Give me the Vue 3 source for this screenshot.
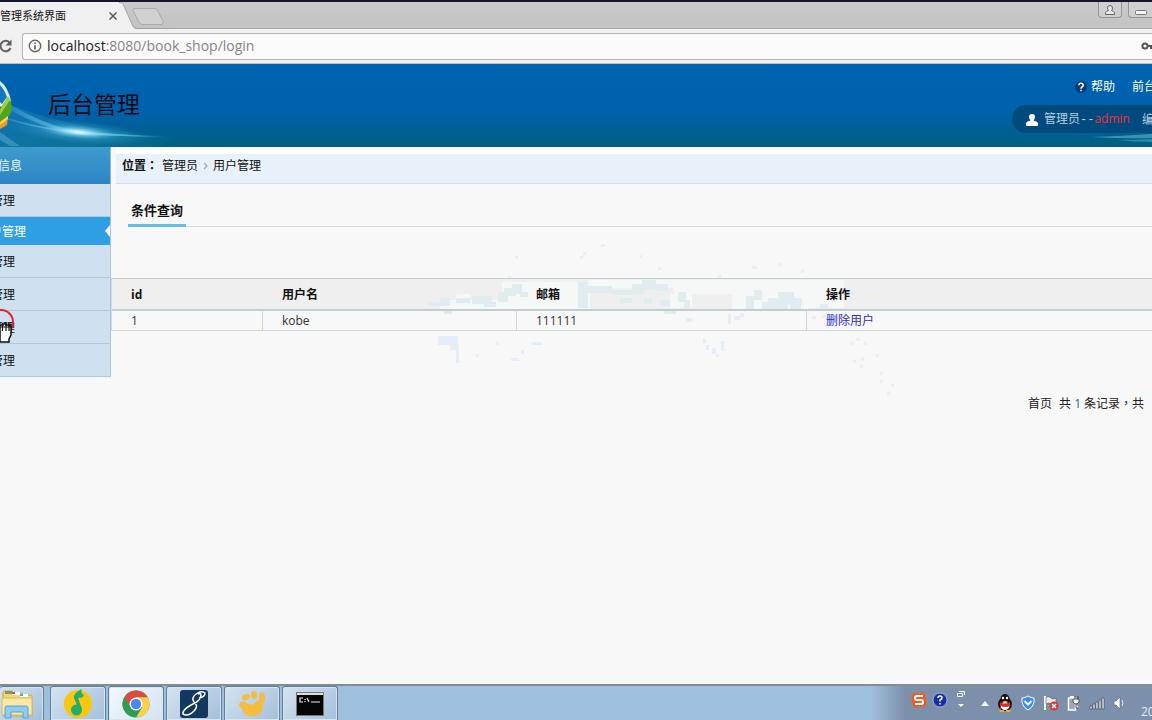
<script setup>
import { ref } from 'vue'

const url = ref('localhost:8080/book_shop/login')
const menu = [
  { text: '管理', kind: 'first' },
  { text: '户管理', kind: 'active' },
  { text: '管理', kind: '' },
  { text: '管理', kind: '' },
  { text: '管理', kind: '' },
  { text: '管理', kind: 'last' }
]
const users = [{ id: 1, name: 'kobe', mail: '111111' }]

// Watermark map cells: x, y, width, height
const sea = [
  [0, 64, 22, 4], [12, 60, 10, 6], [28, 60, 14, 5], [44, 58, 20, 8], [56, 64, 12, 5], [70, 54, 10, 10],
  [76, 50, 12, 8], [84, 46, 10, 10], [92, 54, 8, 5], [16, 72, 8, 4], [150, 44, 10, 26], [160, 48, 24, 7],
  [184, 52, 20, 5], [204, 46, 12, 10], [214, 42, 14, 10], [228, 46, 12, 7], [192, 60, 12, 5], [216, 60, 8, 5],
  [232, 62, 10, 6], [250, 54, 8, 10], [256, 62, 6, 8], [236, 72, 12, 4], [318, 58, 8, 14], [326, 52, 8, 10],
  [334, 64, 26, 7], [340, 60, 34, 7], [350, 54, 16, 8], [336, 68, 10, 4], [362, 66, 11, 6], [418, 54, 8, 3], [392, 66, 8, 4]
]
const blue = [
  [10, 98, 20, 9], [22, 107, 9, 5], [28, 112, 3, 13], [104, 104, 10, 3], [83, 120, 8, 3], [93, 112, 3, 4],
  [300, 76, 3, 10], [306, 78, 6, 4], [312, 75, 4, 4], [258, 80, 6, 4], [275, 101, 3, 4], [278, 107, 3, 5],
  [284, 110, 4, 6], [293, 103, 3, 10], [288, 116, 3, 3]
]
const dots = [
  [80, 38, 3, 3], [87, 18, 3, 3], [152, 18, 3, 3], [155, 14, 3, 3], [173, 6, 4, 3], [212, 17, 2, 3], [230, 29, 3, 3],
  [324, 28, 5, 3], [351, 25, 3, 3], [373, 32, 3, 3], [290, 37, 3, 3], [68, 104, 3, 3], [48, 116, 3, 3],
  [422, 104, 3, 3], [428, 100, 4, 3], [436, 104, 3, 3], [448, 116, 3, 3], [425, 122, 3, 3], [433, 119, 3, 4],
  [432, 127, 3, 3], [452, 134, 3, 3], [452, 142, 3, 3], [463, 146, 3, 3], [459, 154, 3, 3], [384, 78, 4, 3], [394, 77, 4, 3]
]
const land = [
  [12, 62, 90, 10], [28, 56, 14, 6], [74, 44, 28, 22], [96, 44, 66, 28], [160, 42, 86, 8], [246, 42, 44, 14], [290, 42, 34, 14],
  [304, 56, 20, 16], [320, 42, 60, 30], [372, 42, 44, 28], [242, 56, 22, 14]
]
</script>

<template>
  <div class="desktop">
    <div class="tabstrip">
      <svg class="tabshape" width="170" height="27" viewBox="0 0 170 27">
        <path d="M0 0H119C122 0 123 1 124 4L132 22C133 25 134 27 138 27H0Z" fill="#f1f0f1" />
        <path d="M119 .5C122 .5 123 2 124 4L132 22C133 25 134 26.500 138 26.500H170" fill="none" stroke="#a3a3a3" />
        <path d="M135 6.500H154Q157 6.500 158 9L163 19Q164 22.500 161 22.500H143Q140 22.500 139 20L133 9Q132 6.500 135 6.500Z" fill="#d1d1d2" stroke="#a9a9a9" />
      </svg>
      <span class="tabtitle">管理系统界面</span>
      <button class="tabclose" aria-label="关闭">
        <svg width="10" height="10" viewBox="0 0 10 10"><path d="M1.500 1.500L8.500 8.500M8.500 1.500L1.500 8.500" stroke="#5a5a5a" stroke-width="1.500" /></svg>
      </button>
      <div class="winbtns">
        <button class="wb" aria-label="用户">
          <svg width="12" height="12" viewBox="0 0 12 12" fill="#e6e6e6" stroke="#666"><path d="M1.500 10.500V8.500Q2 7 4.500 6.500Q3.500 5.500 3.500 4Q3.500 1.500 6 1.500T8.500 4Q8.500 5.500 7.500 6.500Q10 7 10.500 8.500V10.500Z" /></svg>
        </button>
        <button class="wb cut" aria-label="最小化">
          <svg width="14" height="12" viewBox="0 0 14 12"><rect x="1.500" y="6.500" width="11" height="4" rx="1" fill="#f5f5f5" stroke="#777" /></svg>
        </button>
      </div>
    </div>

    <div class="toolbar">
      <button class="reload" aria-label="重新加载">
        <svg width="14" height="16" viewBox="0 0 14 16"><path d="M9.500 4.500A5.200 5.200 0 1 0 10.500 10" fill="none" stroke="#616161" stroke-width="2" /><path d="M11.500 1.500V7.500H5.500Z" fill="#616161" /></svg>
      </button>
      <label class="address">
        <svg width="14" height="14" viewBox="0 0 14 14"><circle cx="7" cy="7" r="5.700" fill="none" stroke="#666" stroke-width="1.400" /><path d="M7 6.200V10.500M7 3.500V5" stroke="#555" stroke-width="1.600" /></svg>
        <span class="urlbox">
          <input v-model="url" aria-label="网址" />
          <span class="urltext" aria-hidden="true"><b>localhost</b>:8080/book_shop/login</span>
        </span>
        <svg width="11" height="10" viewBox="0 0 11 10"><circle cx="4" cy="5" r="2.600" fill="none" stroke="#555" stroke-width="2" /><path d="M6.500 5H11M10 5V8" stroke="#555" stroke-width="2" /></svg>
      </label>
    </div>

    <header class="banner">
      <svg class="swoosh" width="200" height="83" viewBox="0 0 200 83">
        <defs>
          <radialGradient id="glow"><stop offset="0" stop-color="#f2ffff" /><stop offset=".2" stop-color="#8fdcf5" stop-opacity=".9" /><stop offset=".55" stop-color="#35a3cf" stop-opacity=".4" /><stop offset="1" stop-color="#2396c0" stop-opacity="0" /></radialGradient>
          <linearGradient id="ray"><stop offset="0" stop-color="#2c8fd6" stop-opacity=".7" /><stop offset=".5" stop-color="#bdf0fb" /><stop offset="1" stop-color="#56b4d2" stop-opacity="0" /></linearGradient>
          <linearGradient id="haze" x1="0" y1="0" x2="1" y2="0"><stop offset="0" stop-color="#1b7fb8" stop-opacity=".6" /><stop offset=".5" stop-color="#1b86b0" stop-opacity=".4" /><stop offset="1" stop-color="#1b8cae" stop-opacity="0" /></linearGradient>
        </defs>
        <path d="M0 36C35 52 80 66 180 73L160 83H0Z" fill="url(#haze)" />
        <path d="M8 40C32 52 50 64 88 68L165 73L82 71C50 66 28 56 8 45Z" fill="url(#ray)" opacity=".8" />
        <path d="M8 55C38 64 65 70 165 73" fill="none" stroke="url(#ray)" stroke-width="1.500" />
        <path d="M0 68L20 82H10L0 76Z" fill="#4aa5c8" opacity=".6" />
        <ellipse cx="78" cy="68" rx="70" ry="12" fill="url(#glow)" transform="rotate(5 78 68)" />
        <path d="M0 17Q8 23 11 37L3 45L0 42Z" fill="#d9eefb" />
        <path d="M0 21Q4 25 7 33L2 40L0 38Z" fill="#1376c0" />
        <path d="M0 45L8 33Q12 38 12 46L9 52L0 58Z" fill="#4fa51e" />
        <path d="M0 46L8 32L10 36L0 51Z" fill="#a4ce36" />
        <path d="M0 58L8 52L7 61L0 65Z" fill="#f29a1d" />
        <path d="M0 58L8 52V55L0 61Z" fill="#ffd04c" />
      </svg>
      <h1>后台管理</h1>
      <div class="account">
        <nav class="links">
          <svg width="12" height="12" viewBox="0 0 12 12"><circle cx="6" cy="6" r="6" fill="#073d76" /><path d="M3.800 4.300Q4 2.300 6 2.300T8.200 4.200Q8.200 5.300 6.900 6Q6 6.500 6 7.700M6 8.800V10.300" fill="none" stroke="#fff" stroke-width="1.500" /></svg>
          <a href="#">帮助</a><i></i><a href="#">前台</a>
        </nav>
        <div class="pill">
          <svg width="12" height="12" viewBox="0 0 12 12"><path d="M0 11V9Q1 7 4 6.800L4.300 6Q3 5 3 3Q3 0 6 0T9 3Q9 5 7.700 6L8 6.800Q11 7 12 9V11Q12 12 11 12H1Q0 12 0 11Z" fill="#fff" /></svg>
          <span>管理员<span class="dash">--</span><em>admin</em></span><a href="#">编</a>
        </div>
        <svg class="streak" width="60" height="12" viewBox="0 0 60 12"><path d="M0 4Q30 3 60 1V5Q30 6 0 4Z" fill="#5db4cc" opacity=".6" /><path d="M25 7Q42 7 60 6V9Q42 9 25 7Z" fill="#4aa3bd" opacity=".6" /></svg>
      </div>
    </header>

    <div class="body">
      <aside>
        <h2>信息</h2>
        <ul>
          <li v-for="(m, i) in menu" :key="i" :class="m.kind"><a href="#">{{ m.text }}</a></li>
        </ul>
        <svg class="cursor" width="18" height="36" viewBox="0 0 18 36">
          <circle cx="1" cy="13" r="12" fill="none" stroke="#e3222d" stroke-width="2" />
          <path d="M0 16H3V15H6V16H9V17H11V26L9 30V33H0Z" fill="#fff" stroke="#111" stroke-width="1.500" />
          <path d="M2.500 14V22M6 14V22M9 14V22M0 18H11" stroke="#111" stroke-width="1.200" />
        </svg>
      </aside>

      <main>
        <div class="crumbs">
          <b>位置：</b><a href="#">管理员</a>
          <svg width="5" height="8" viewBox="0 0 5 8"><path d="M1 1L4 4L1 7" fill="none" stroke="#9aa9b5" stroke-width="1.200" /></svg>
          <a href="#">用户管理</a>
        </div>
        <div class="section"><h3>条件查询</h3></div>
        <div class="listing">
          <svg class="map" width="480" height="160" viewBox="0 0 480 160" shape-rendering="crispEdges">
            <rect v-for="(r, i) in land" :key="'l' + i" :x="r[0]" :y="r[1]" :width="r[2]" :height="r[3]" fill="#f6f7f7" />
            <rect v-for="(r, i) in sea" :key="'s' + i" :x="r[0]" :y="r[1]" :width="r[2]" :height="r[3]" fill="#e1ecef" />
            <rect v-for="(r, i) in blue" :key="'b' + i" :x="r[0]" :y="r[1]" :width="r[2]" :height="r[3]" fill="#e4edf8" />
            <rect v-for="(r, i) in dots" :key="'d' + i" :x="r[0]" :y="r[1]" :width="r[2]" :height="r[3]" fill="#ebeff1" />
          </svg>
          <table>
            <thead>
              <tr><th class="c1">id</th><th class="c2">用户名</th><th class="c3">邮箱</th><th>操作</th></tr>
            </thead>
            <tbody>
              <tr v-for="u in users" :key="u.id">
                <td>{{ u.id }}</td><td>{{ u.name }}</td><td>{{ u.mail }}</td><td><a href="#">删除用户</a></td>
              </tr>
            </tbody>
          </table>
        </div>
        <div class="pager"><a href="#">首页</a><span>共 <em>1</em> 条记录，共</span><em>1</em></div>
      </main>
    </div>

    <footer class="taskbar">
      <button class="task explorer" aria-label="资源管理器">
        <svg width="34" height="32" viewBox="0 0 34 32"><path d="M3 5Q3 3 5 3H12L14 5H22L24 7H30Q32 7 32 9V28H3Z" fill="#f0d678" stroke="#c6a44e" /><path d="M5 3H12V6H5Z" fill="#7d9d55" /><path d="M12 4H20V7H12Z" fill="#fff" /><path d="M12 4H15V6H12Z" fill="#d8572f" /><path d="M20 6H28V9H20Z" fill="#fff" /><path d="M20 6H23V8H20Z" fill="#4da0d8" /><path d="M2 10H32V27H2Z" fill="#fae9a4" stroke="#d9ba62" /><path d="M5 30V20Q5 18 7 18H26Q28 18 28 20V30H23V24H11V30Z" fill="#8fcdf0" stroke="#4fa4d8" /></svg>
      </button>
      <button class="task" aria-label="音乐">
        <svg width="30" height="30" viewBox="0 0 30 30"><circle cx="15" cy="15" r="14" fill="#fcc60f" /><circle cx="13.500" cy="21" r="5.500" fill="#22ad6b" /><path d="M16 21L11 9Q10 4 19 0Q17 4 21 6Q21 9 15 9L19 20Z" fill="#22ad6b" /></svg>
      </button>
      <button class="task current" aria-label="Chrome">
        <svg width="28" height="28" viewBox="0 0 28 28"><circle cx="14" cy="14" r="13.500" fill="#2e9d54" /><path d="M14 14L2.300 7.250A13.500 13.500 0 0 1 25.700 7.250H14Z" fill="#dd4b3e" /><path d="M14 7.250H25.700A13.500 13.500 0 0 1 14 27.500L20 17.500Z" fill="#fdd04a" /><path d="M2.300 7.250L8.500 17.500L14 10Z" fill="#dd4b3e" /><path d="M2.300 7.250L8.500 17.500Q11 20 14 20L12 27.300A13.500 13.500 0 0 1 2.300 7.250Z" fill="#2e9d54" /><circle cx="14" cy="14" r="6.500" fill="#fff" /><circle cx="14" cy="14" r="5.200" fill="#4c87ef" /></svg>
      </button>
      <button class="task" aria-label="编辑器">
        <svg width="30" height="30" viewBox="0 0 30 30"><rect x="1" y="1" width="28" height="28" rx="3" fill="#123860" /><path d="M20 9Q26 8 26 4Q23 1 17 5Q12 9 15 13Q20 17 15 22Q9 28 4 25Q3 21 12 16Q22 12 22 6Q22 4 19 5" fill="none" stroke="#fff" stroke-width="1.500" /></svg>
      </button>
      <button class="task" aria-label="应用">
        <svg width="28" height="28" viewBox="0 0 28 28" fill="#f5bd3d"><path d="M1 14Q4 9 9 13Q14 17 18 12Q22 8 25 14Q26 26 14 26Q4 25 4 18Q1 17 1 14Z" /><ellipse cx="8" cy="7" rx="4" ry="3" transform="rotate(-25 8 7)" /><ellipse cx="16" cy="5" rx="3" ry="4" /><ellipse cx="24" cy="8" rx="3" ry="6" /></svg>
      </button>
      <button class="task" aria-label="命令提示符">
        <svg width="28" height="24" viewBox="0 0 28 24"><rect x=".5" y=".5" width="27" height="23" fill="#050505" stroke="#777" /><rect x="1" y="1" width="26" height="2" fill="#ddd" /><path d="M7 6H4V10H7M9 7V8M9 9V10M11 6L13 10M15 10H24" fill="none" stroke="#eee" stroke-width="1.200" /></svg>
      </button>
      <div class="tray">
        <svg class="ime" width="56" height="22" viewBox="0 0 56 22">
          <rect x="1" y="3" width="14" height="14" rx="3" fill="#f05a23" transform="rotate(-8 8 10)" /><path d="M12 6H6Q4 6 4 8T6 10H10Q12 10 12 12T10 14H4" fill="none" stroke="#fff" stroke-width="2" />
          <circle cx="29" cy="10" r="7" fill="#1a2fa3" stroke="#c3cae8" stroke-width=".7" /><path d="M27 8Q27 6 29 6T31 8Q31 9 29 10V11.500M29 13V14.500" fill="none" stroke="#fff" stroke-width="1.500" />
          <path d="M46.500 3.500H51.500V6.500H46.500ZM48 1.500H53.500V5" fill="none" stroke="#fff" /><path d="M47 14H53L50 17Z" fill="#fff" />
        </svg>
        <svg width="8" height="5" viewBox="0 0 8 5"><path d="M0 5L4 0L8 5Z" fill="#f4f7fa" /></svg>
        <svg width="16" height="18" viewBox="0 0 16 18"><ellipse cx="8" cy="10" rx="7" ry="7" fill="#151515" /><ellipse cx="8" cy="5" rx="4.500" ry="5" fill="#151515" /><ellipse cx="8" cy="12" rx="4.500" ry="4" fill="#fff" /><path d="M3 8Q8 11 13 8L13 12Q8 14 4 12V15H3Z" fill="#e3262d" /><circle cx="6" cy="4" r="1.200" fill="#fff" /><circle cx="10" cy="4" r="1.200" fill="#fff" /><path d="M5 7H11L8 8.500ZM2 16H7V18H3ZM9 16H14L13 18H9Z" fill="#f6a81a" /></svg>
        <svg width="14" height="16" viewBox="0 0 14 16"><path d="M1 3Q4 3 7 1Q10 3 13 3Q14 11 7 15Q0 11 1 3Z" fill="#3b8bea" stroke="#fff" /><path d="M3.500 6L7 9.500L10.500 6" fill="none" stroke="#fff" stroke-width="2" /></svg>
        <svg width="16" height="16" viewBox="0 0 16 16"><path d="M2 1V15" stroke="#fff" stroke-width="2" /><path d="M3 2Q6 1 8 3T13 3V10Q10 11 8 9T3 9Z" fill="#e8ecf0" stroke="#555" stroke-width=".6" /><circle cx="11" cy="11" r="4.500" fill="#dd3730" /><path d="M9 9L13 13M13 9L9 13" stroke="#fff" stroke-width="1.500" /></svg>
        <svg width="14" height="16" viewBox="0 0 14 16"><rect x="1.500" y="3" width="7" height="12" fill="#9aa6b5" stroke="#fff" stroke-width="1.500" /><path d="M3 1H7V3H3Z" fill="#fff" /><path d="M6 4V7Q7 9 9 9T12 7V4ZM8 1V4M11 1V4M9 9V13H12" fill="#fff" stroke="#444" stroke-width=".9" /></svg>
        <svg width="16" height="14" viewBox="0 0 16 14"><path d="M1 10H3V13H1ZM4 8H6V13H4ZM7 6H9V13H7ZM10 4H12V13H10ZM13 2H15V13H13Z" fill="#f4f7fa" stroke="#3e4b5c" stroke-width=".7" /></svg>
        <svg width="14" height="14" viewBox="0 0 14 14"><path d="M1 5H3L7 1V13L3 9H1Z" fill="#fff" stroke="#556" stroke-width=".6" /><path d="M9 4Q11 7 9 10" fill="none" stroke="#e0e8f0" /></svg>
        <span class="clock">20</span>
      </div>
    </footer>
  </div>
</template>

<style>
body { margin: 0; overflow: hidden; }
</style>

<style scoped>
* { box-sizing: border-box; }
.desktop { min-height: 100vh; display: flex; flex-direction: column; overflow: hidden; white-space: nowrap; background: #f8f8f8; color: #111; font: 12px/16px "Open Sans", "Noto Sans CJK SC", sans-serif; }
button { padding: 0; border: 0; background: none; }
svg { display: block; flex: none; }
a { color: inherit; text-decoration: none; }
em { font-style: normal; }
h1, h2, h3, ul { margin: 0; padding: 0; list-style: none; font-weight: 400; }

.tabstrip { position: relative; display: flex; align-items: center; height: 29px; padding-top: 2px; border-top: 2px solid #15152f; border-bottom: 1px solid #a9a9a9; background: linear-gradient(#cacaca, #c3c3c3); }
.tabshape { position: absolute; left: 0; top: 0; }
.tabtitle { position: relative; width: 108px; font-size: 11px; }
.tabclose { position: relative; width: 12px; }
.winbtns { display: flex; gap: 6px; margin: -2px 0 0 auto; align-self: flex-start; }
.wb { display: flex; align-items: center; justify-content: center; width: 24px; height: 16px; border: 1px solid #949494; border-top: 0; border-radius: 0 0 4px 4px; background: #d0d0d0; }
.wb.cut { border-right: 0; border-radius: 0 0 0 4px; }

.toolbar { display: flex; align-items: center; height: 35px; background: #f1f0f1; border-bottom: 1px solid #b8bfc5; }
.reload { width: 22px; }
.address { display: flex; align-items: center; gap: 5px; flex: 1; height: 27px; padding-left: 5px; border: 1px solid #b4b4b4; border-right: 0; border-radius: 3px 0 0 3px; background: #fafafa; }
.urlbox { position: relative; flex: 1; height: 20px; font-size: 14px; line-height: 20px; }
.urlbox input { width: 100%; height: 20px; padding: 0; border: 0; outline: 0; background: none; font: inherit; color: transparent; caret-color: #222; }
.urltext { position: absolute; left: 0; top: 0; color: #858585; pointer-events: none; }
.urltext b { font-weight: 400; color: #222; }

.banner { position: relative; display: flex; justify-content: space-between; height: 83px; background: linear-gradient(#0063b1, #0062ae 55%, #005f93 80%, #00627e); }
.swoosh { position: absolute; left: 0; top: 0; }
h1 { position: relative; padding: 25px 0 0 48px; font-size: 23px; line-height: 30px; color: #050b14; }
.account { position: relative; width: 140px; padding-top: 14px; overflow: hidden; color: #e6f0f8; }
.streak { position: absolute; right: 0; bottom: 2px; }
.links { display: flex; align-items: center; gap: 4px; padding-left: 63px; height: 18px; color: #fff; }
.links i { width: 1px; height: 12px; margin: 0 5px 0 4px; background: #0a4d8b; }
.pill { display: flex; align-items: center; gap: 6px; width: 240px; height: 28px; margin-top: 9px; padding: 1px 0 0 14px; border-radius: 14px; background: #004a7d; color: #b9d2e3; }
.pill em { color: #f0303c; }
.pill a { margin-left: 6px; }
.dash { font-family: "Liberation Mono", monospace; }

.body { display: flex; flex: 1; }
aside { position: relative; width: 111px; flex: none; }
h2 { height: 37px; border-right: 1px solid #8ab9dc; background: linear-gradient(#3f9bce, #2d84c4); color: #e9f5fc; font-size: 12px; line-height: 38px; text-indent: -2px; overflow: hidden; }
li { position: relative; height: 33px; border-right: 1px solid #a9c8da; border-bottom: 1px solid #afc9da; background: #cfe0f0; line-height: 34px; text-indent: -9px; overflow: hidden; }
li.active { height: 28px; border-bottom: 0; background: #2f9fe3; color: #fff; line-height: 30px; text-indent: -10px; }
li.active::after { content: ""; position: absolute; right: 0; top: 8px; border: 6px solid transparent; border-left: 0; border-right: 5px solid #f4f9fd; }
.cursor { position: absolute; left: 0; top: 162px; }

main { flex: 1; min-width: 0; }
.crumbs { display: flex; align-items: center; height: 37px; margin-left: 5px; padding: 0 0 5px 6px; border-top: 7px solid #fdfefe; border-bottom: 1px solid #d6dfe6; background: #e8f0fa; }
.crumbs b { width: 40px; font-family: "Open Sans", "Noto Sans CJK TC", sans-serif; }
.crumbs svg { margin: 0 5px; }
.section { display: flex; margin: 14px 0 0 17px; height: 29px; border-bottom: 1px solid #d3dbe0; }
h3 { height: 29px; padding: 0 3px; border-bottom: 3px solid #66bde4; font-size: 13px; line-height: 24px; font-weight: 700; }
.listing { position: relative; margin-top: 51px; background: linear-gradient(#efefef 32px, transparent 32px); }
table { position: relative; width: 100%; border-collapse: separate; border-spacing: 0; table-layout: fixed; border-left: 1px solid #d3dadd; }
th { height: 33px; padding: 2px 0 0 19px; border-top: 1px solid #c3cdd0; border-bottom: 2px solid #c0ced4; text-align: left; font-weight: 700; }
td { height: 20px; padding: 1px 0 0 19px; border-right: 1px solid #cfd7db; border-bottom: 1px solid #cfd7db; line-height: 18px; color: #333; }
td:last-child { border-right: 0; }
td a { color: #2b2bd8; }
.c1 { width: 151px; }
.c2 { width: 254px; }
.c3 { width: 290px; }
.map { position: absolute; left: 317px; top: -40px; pointer-events: none; }
.pager { display: flex; justify-content: flex-end; gap: 7px; margin-top: 65px; margin-right: -6px; color: #222; font-family: "Open Sans", "Noto Sans CJK TC", sans-serif; }
.pager em { color: #1c6d9e; }

.taskbar { display: flex; height: 36px; border-top: 2px solid #7f8d9a; background: #9fc0dd; overflow: hidden; }
.task { display: flex; align-items: center; justify-content: center; width: 56px; margin-right: 2px; border: 1px solid #5f7c9a; border-bottom: 0; border-radius: 3px 3px 0 0; background: linear-gradient(135deg, #d5e3f1, #a4bfda); box-shadow: inset 0 0 0 1px #d8e6f2; }
.task.explorer { width: 44px; margin-right: 6px; border-left: 0; justify-content: flex-start; box-shadow: inset -1px 1px 0 #d8e6f2; }
.task.current { background: linear-gradient(135deg, #f3f8fd, #d4e3f2); }
.tray { display: flex; align-items: center; gap: 8px; margin-left: auto; padding-left: 40px; background: linear-gradient(90deg, #9fc0dd, #7d90ab 34px); }
.ime { margin-right: 6px; align-self: flex-start; margin-top: 4px; }
.clock { width: 11px; margin-left: 6px; align-self: flex-end; color: #e6edf5; overflow: hidden; }
</style>
